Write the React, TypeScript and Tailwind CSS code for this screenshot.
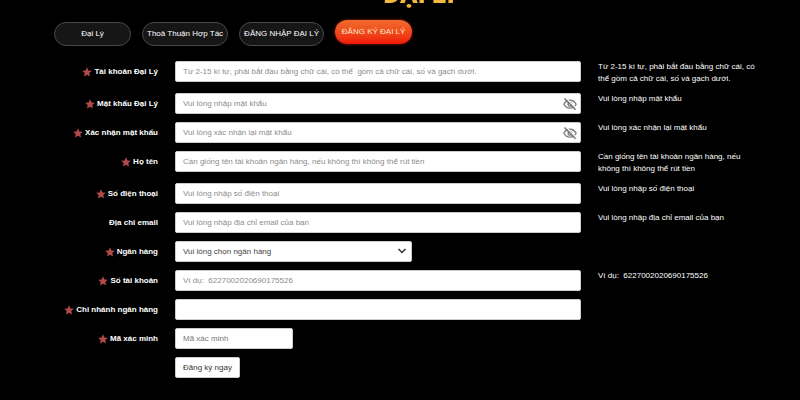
import React, { useState } from "react";

type Field = {
    id: string;
    label: string;
    required?: boolean;
    type?: string;
    placeholder?: string;
    hint?: string;
};

const tabs = ["Đại Lý", "Thoả Thuận Hợp Tác", "ĐĂNG NHẬP ĐẠI LÝ"];

const fields: Field[] = [
    {
        id: "account",
        label: "Tài khoản Đại Lý",
        required: true,
        placeholder:
            "Từ 2-15 kí tự, phải bắt đầu bằng chữ cái, có thể  gồm cả chữ cái, số và gạch dưới.",
        hint: "Từ 2-15 kí tự, phải bắt đầu bằng chữ cái, có thể gồm cả chữ cái, số và gạch dưới.",
    },
    {
        id: "password",
        label: "Mật khẩu Đại Lý",
        required: true,
        type: "password",
        placeholder: "Vui lòng nhập mật khẩu",
        hint: "Vui lòng nhập mật khẩu",
    },
    {
        id: "confirm",
        label: "Xác nhận mật khẩu",
        required: true,
        type: "password",
        placeholder: "Vui lòng xác nhận lại mật khẩu",
        hint: "Vui lòng xác nhận lại mật khẩu",
    },
    {
        id: "name",
        label: "Họ tên",
        required: true,
        placeholder:
            "Cần giống tên tài khoản ngân hàng, nếu không thì không thể rút tiền",
        hint: "Cần giống tên tài khoản ngân hàng, nếu không thì không thể rút tiền",
    },
    {
        id: "phone",
        label: "Số điện thoại",
        required: true,
        placeholder: "Vui lòng nhập số điện thoại",
        hint: "Vui lòng nhập số điện thoại",
    },
    {
        id: "email",
        label: "Địa chỉ email",
        placeholder: "Vui lòng nhập địa chỉ email của bạn",
        hint: "Vui lòng nhập địa chỉ email của bạn",
    },
    { id: "bank", label: "Ngân hàng", required: true, type: "select" },
    {
        id: "number",
        label: "Số tài khoản",
        required: true,
        placeholder: "Ví dụ:  6227002020690175526",
        hint: "Ví dụ:  6227002020690175526",
    },
    { id: "branch", label: "Chi nhánh ngân hàng", required: true },
    {
        id: "code",
        label: "Mã xác minh",
        required: true,
        type: "code",
        placeholder: "Mã xác minh",
    },
];

const Star = () => (
    <svg viewBox="0 0 24 24" className="size-[10px] shrink-0" aria-hidden="true">
        <path
            d="M12 0.5l3.4 7.6 8.2 0.9-6.1 5.6 1.7 8.2L12 18.7l-7.2 4.1 1.7-8.2L0.4 9l8.2-0.9z"
            fill="#b34a4a"
        />
    </svg>
);

const EyeOff = () => (
    <svg viewBox="0 0 24 24" className="size-[14px]" fill="none" aria-hidden="true">
        <path
            d="M1.500 12.500c2.200-4.500 6-7 10.500-7s8.300 2.500 10.500 7c-2.200 4.300-6 6.500-10.500 6.500s-8.300-2.200-10.500-6.500z"
            stroke="#808080"
            strokeWidth="2.400"
        />
        <circle cx="12" cy="12.500" r="3.200" stroke="#808080" strokeWidth="2.400" />
        <path d="M5 1.500l18 18.500" stroke="#ffffff" strokeWidth="2" />
        <path d="M2.500 2.500l19 19.500" stroke="#757575" strokeWidth="2.400" />
    </svg>
);

const Control = ({ field }: { field: Field }) => {
    const [visible, setVisible] = useState(false);
    const box =
        "block h-[21px] rounded-[2px] border border-[#cccccc] bg-white px-[7px] text-[#444444] outline-none";

    if (field.type === "select") {
        return (
            <div className="relative w-7/12">
                <select id={field.id} className={`${box} w-full appearance-none`}>
                    <option>Vui lòng chọn ngân hàng</option>
                </select>
                <svg
                    viewBox="0 0 12 12"
                    className="pointer-events-none absolute right-1 top-1 size-3"
                    fill="none"
                    aria-hidden="true"
                >
                    <path d="M2.500 4l3.500 3.500L9.500 4" stroke="#333333" strokeWidth="1.500" />
                </svg>
            </div>
        );
    }

    if (field.type === "code") {
        return (
            <input
                id={field.id}
                placeholder={field.placeholder}
                className={`${box} w-[29%] placeholder:text-[#777777]`}
            />
        );
    }

    if (field.type === "password") {
        return (
            <div className="relative">
                <input
                    id={field.id}
                    type={visible ? "text" : "password"}
                    placeholder={field.placeholder}
                    className={`${box} w-full placeholder:text-[#8c8c8c]`}
                />
                <button
                    type="button"
                    aria-label={field.label}
                    onClick={() => setVisible(!visible)}
                    className="absolute inset-y-0 right-1 flex items-center"
                >
                    <EyeOff />
                </button>
            </div>
        );
    }

    return (
        <input
            id={field.id}
            type="text"
            placeholder={field.placeholder}
            className={`${box} w-full placeholder:text-[#8c8c8c]`}
        />
    );
};

const row = "grid grid-cols-[104fr_406fr_174fr] items-start gap-x-[17px]";

const App = () => {
    return (
        <div className="min-h-screen w-full overflow-hidden bg-black font-['Liberation_Sans',Arial,sans-serif] text-[8px] text-white">
            <header className="flex h-5 items-end justify-center overflow-hidden pb-[10px] pl-[42px]">
                <h1 className="bg-gradient-to-b from-[#ffe27a] to-[#f0a822] bg-clip-text font-['Roboto',sans-serif] text-[26px] font-black leading-8 text-transparent">
                    ĐẠI LÝ
                </h1>
            </header>
            <main className="pl-[54px] pr-7">
                <nav className="flex items-start gap-[11px]">
                    {tabs.map((tab) => (
                        <a
                            key={tab}
                            href="#"
                            className="mt-[2px] flex h-6 min-w-[77px] items-center justify-center rounded-full border border-[#484848] bg-[#161616] px-1"
                        >
                            {tab}
                        </a>
                    ))}
                    <a
                        href="#"
                        aria-current="page"
                        className="flex h-6 min-w-[77px] items-center justify-center rounded-full bg-gradient-to-b from-[#f06a2c] to-[#ee1206] px-1 text-[#ffe6c8] shadow-[0_0_3px_#a02010]"
                    >
                        ĐĂNG KÝ ĐẠI LÝ
                    </a>
                </nav>
                <form
                    className="flex flex-col gap-2 pb-5 pt-[15px]"
                    onSubmit={(e) => e.preventDefault()}
                >
                    {fields.map((field) => (
                        <div key={field.id} className={row}>
                            <label
                                htmlFor={field.id}
                                className="flex h-[21px] items-center justify-end gap-[2px] whitespace-nowrap font-bold"
                            >
                                {field.required && <Star />}
                                {field.label}
                            </label>
                            <Control field={field} />
                            {field.hint && (
                                <p className="max-w-[164px] whitespace-pre-wrap leading-3">
                                    {field.hint}
                                </p>
                            )}
                        </div>
                    ))}
                    <div className={row}>
                        <button
                            type="submit"
                            className="col-start-2 h-[21px] justify-self-start rounded-[2px] border border-[#cccccc] bg-white px-[7px] text-[#333333]"
                        >
                            Đăng ký ngay
                        </button>
                    </div>
                </form>
            </main>
        </div>
    );
};

export default App;
